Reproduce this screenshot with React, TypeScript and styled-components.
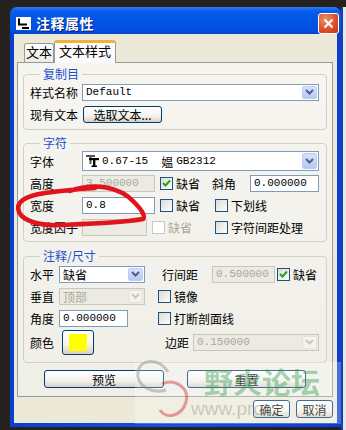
import styled, { createGlobalStyle } from "styled-components";

const Global = createGlobalStyle`
    html, body {
        margin: 0;
        padding: 0;
    }
    body {
        background: #26221f;
        font-family: "Noto Sans CJK SC", "Liberation Sans", sans-serif;
        font-size: 12px;
        color: #000;
    }
`

const Page = styled.div`
    position: relative;
    width: 346px;
    height: 430px;
    overflow: hidden;
    box-sizing: border-box;
    padding: 7px 0 0 10px;
    display: flex;
    align-items: flex-start;
`

const RightEdge = styled.div`
    width: 5px;
    height: 423px;
    background: #e6e7ec;
    border-left: 2px solid #1b3fa8;
    box-sizing: border-box;
`

const Window = styled.div`
    width: 331px;
    height: 420px;
    display: flex;
    flex-direction: column;
    border-radius: 7px 7px 0 0;
    background: linear-gradient(to right, #0b3fd4, #1650e0 50%, #0b3fd4);
    overflow: hidden;
`

const TitleBar = styled.div`
    height: 27px;
    flex: none;
    display: flex;
    align-items: center;
    padding: 5px 2px 0 6px;
    box-sizing: border-box;
    gap: 5px;
    background: linear-gradient(#2f7cf6 0%, #0a5ce8 15%, #0055e5 50%, #0350e0 85%, #0744c8 100%);
`

const Title = styled.span`
    color: #fff;
    font-size: 14px;
    font-weight: bold;
    letter-spacing: 0.5px;
    text-shadow: 1px 1px 0 #0a1f80;
    flex: 1;
`

const CloseButton = styled.div`
    width: 21px;
    height: 21px;
    box-sizing: border-box;
    border: 1px solid #fff;
    border-radius: 3px;
    background: radial-gradient(circle at 35% 30%, #f0906e, #db4b25 60%, #c23a17);
    display: flex;
    align-items: center;
    justify-content: center;
`

const Body = styled.div`
    flex: 1;
    margin: 0 4px 4px;
    background: #ece9d8;
    padding: 6px 4px 0 3px;
    display: flex;
    flex-direction: column;
`

const Tabs = styled.div`
    display: flex;
    align-items: flex-end;
    height: 22px;
    margin-left: 7px;
`

const Tab = styled.div<{ $active?: boolean }>`
    box-sizing: border-box;
    height: ${p => p.$active ? "23px" : "19px"};
    width: ${p => p.$active ? "62px" : "30px"};
    margin-bottom: ${p => p.$active ? "-1px" : "0"};
    position: relative;
    z-index: ${p => p.$active ? 1 : 0};
    border: 1px solid #919b9c;
    border-bottom: none;
    border-top: ${p => p.$active ? "3px solid #f0b040" : "1px solid #919b9c"};
    border-radius: 3px 3px 0 0;
    background: ${p => p.$active ? "#fcfcfe" : "linear-gradient(#ffffff, #ecebe6)"};
    font-size: 13px;
    line-height: 16px;
    text-align: center;
`

const Panel = styled.div`
    flex: none;
    height: 335px;
    box-sizing: border-box;
    border: 1px solid #919b9c;
    background: linear-gradient(#f6f5f0, #efeee7);
    padding: 4px 5px 0;
    display: flex;
    flex-direction: column;
`

const Group = styled.fieldset<{ $mt?: number; $pb?: number }>`
    margin: ${p => p.$mt ?? 0}px 0 0;
    padding: 0 7px ${p => p.$pb ?? 4}px 6px;
    border: 1px solid #d3d0c0;
    border-radius: 4px;
    min-width: 0;
`

const Legend = styled.legend`
    color: #1d4fd0;
    font-size: 12px;
    line-height: 14px;
    padding: 0 3px;
    margin-left: 10px;
`

const Row = styled.div<{ $h?: number }>`
    height: ${p => p.$h ?? 22}px;
    display: flex;
    align-items: center;
`

const Label = styled.span<{ $w: number; $ml?: number }>`
    flex: none;
    width: ${p => p.$w}px;
    margin-left: ${p => p.$ml ?? 0}px;
    font-size: 12px;
    white-space: nowrap;
`

const Field = styled.div<{ $w?: number; $h?: number; $disabled?: boolean }>`
    box-sizing: border-box;
    ${p => p.$w ? `width: ${p.$w}px; flex: none;` : "flex: 1;"}
    height: ${p => p.$h ?? 17}px;
    border: 1px solid ${p => p.$disabled ? "#c9c7ba" : "#7f9db9"};
    background: ${p => p.$disabled ? "#ebebe4" : "#fff"};
    color: ${p => p.$disabled ? "#aca899" : "#000"};
    font-family: "Liberation Mono", "DejaVu Sans Mono", monospace;
    font-size: 11px;
    padding-left: 3px;
    display: flex;
    align-items: center;
    overflow: hidden;
    white-space: nowrap;
`

const SelectBox = styled(Field)`
    padding-right: 1px;
`

const SelectText = styled.span<{ $cjk?: boolean }>`
    flex: 1;
    display: flex;
    align-items: center;
    gap: 3px;
    font-family: ${p => p.$cjk ? `"Noto Sans CJK SC", sans-serif` : `"Liberation Mono", monospace`};
    font-size: ${p => p.$cjk ? "12px" : "11px"};
`

const Cjk = styled.span`
    font-family: "Noto Sans CJK SC", sans-serif;
    font-size: 12px;
    margin-left: 10px;
`

const Drop = styled.div<{ $disabled?: boolean }>`
    width: 15px;
    height: calc(100% - 2px);
    max-height: 17px;
    box-sizing: border-box;
    border-radius: 2px;
    border: 1px solid ${p => p.$disabled ? "#e4e2d8" : "#bccdf5"};
    background: ${p => p.$disabled ? "#f4f3ee" : "linear-gradient(#d6e1fc, #b4c8f6)"};
    display: flex;
    align-items: center;
    justify-content: center;
`

const Check = styled.label<{ $ml?: number; $disabled?: boolean }>`
    display: flex;
    align-items: center;
    gap: 3px;
    margin-left: ${p => p.$ml ?? 0}px;
    color: ${p => p.$disabled ? "#aca899" : "#000"};
    font-size: 12px;
    white-space: nowrap;
`

const Box = styled.span<{ $disabled?: boolean }>`
    width: 13px;
    height: 13px;
    box-sizing: border-box;
    border: 1px solid ${p => p.$disabled ? "#cac8bb" : "#1c5180"};
    background: ${p => p.$disabled ? "#fff" : "linear-gradient(135deg, #dcdcd7, #fdfdfb)"};
    display: flex;
    align-items: center;
    justify-content: center;
`

const Button = styled.div<{ $w: number; $h?: number }>`
    box-sizing: border-box;
    width: ${p => p.$w}px;
    height: ${p => p.$h ?? 18}px;
    border: 1px solid #003c74;
    border-radius: 3px;
    background: linear-gradient(#ffffff, #f3f2ec 60%, #d6d0c5);
    font-size: 12px;
    display: flex;
    align-items: center;
    justify-content: center;
    flex: none;
`

const Swatch = styled.span<{ $color: string }>`
    width: 18px;
    height: 17px;
    background: ${p => p.$color};
`

const ButtonRow = styled.div`
    display: flex;
    justify-content: center;
    gap: 23px;
    margin-top: 7px;
`

const Footer = styled.div`
    display: flex;
    justify-content: flex-end;
    gap: 6px;
    margin-top: 3px;
`

const Scribble = styled.svg`
    position: absolute;
    left: 0;
    top: 0;
    pointer-events: none;
`

const Haze = styled.div`
    position: absolute;
    left: 135px;
    top: 362px;
    width: 206px;
    height: 62px;
    background: rgba(255, 255, 255, 0.25);
    pointer-events: none;
`

const WatermarkTitle = styled.div`
    position: absolute;
    left: 204px;
    top: 360px;
    font-size: 29px;
    font-weight: bold;
    color: rgba(60, 160, 80, 0.45);
    pointer-events: none;
`

const WatermarkUrl = styled.div`
    position: absolute;
    left: 191px;
    top: 398px;
    font-family: "Liberation Sans", sans-serif;
    font-size: 19px;
    color: rgba(120, 120, 120, 0.35);
    pointer-events: none;
`

const Chevron = ({ disabled }: { disabled?: boolean }) => (
    <svg width="9" height="6" viewBox="0 0 9 6">
        <path d="M1 1 L4.5 4.5 L8 1" stroke={disabled ? "#c9c7ba" : "#4d6185"} strokeWidth="2" fill="none" />
    </svg>
)

const Tick = () => (
    <svg width="9" height="9" viewBox="0 0 9 9">
        <path d="M1 4 L3.5 6.5 L8 1.5" stroke="#21a121" strokeWidth="2" fill="none" />
    </svg>
)

interface SelectProps {
    text: React.ReactNode;
    w?: number;
    h?: number;
    disabled?: boolean;
    cjk?: boolean;
}

const Select = ({ text, w, h, disabled, cjk }: SelectProps) => (
    <SelectBox $w={w} $h={h} $disabled={disabled}>
        <SelectText $cjk={cjk}>{text}</SelectText>
        <Drop $disabled={disabled}><Chevron disabled={disabled} /></Drop>
    </SelectBox>
)

const CheckItem = ({ text, checked, disabled, ml }: { text: string; checked?: boolean; disabled?: boolean; ml?: number }) => (
    <Check $ml={ml} $disabled={disabled}>
        <Box $disabled={disabled}>{checked && <Tick />}</Box>
        {text}
    </Check>
)

const FontIcon = () => (
    <svg width="13" height="12" viewBox="0 0 13 12">
        <rect x="0" y="0" width="9" height="2" fill="#555" />
        <rect x="3.5" y="0" width="2" height="9" fill="#555" />
        <rect x="3" y="3" width="10" height="2.2" fill="#000" />
        <rect x="7" y="3" width="2.4" height="9" fill="#000" />
        <rect x="5.5" y="10.5" width="5.5" height="1.5" fill="#000" />
    </svg>
)

const App = () => {
    return (
        <>
        <Global />
        <Page>
            <Window>
                <TitleBar>
                    <svg width="15" height="13" viewBox="0 0 15 13">
                        <rect x="0" y="0" width="15" height="13" fill="#fff" />
                        <path d="M3 1.5 V7.5 H11" stroke="#000" strokeWidth="2" fill="none" />
                        <rect x="6" y="10" width="7" height="2" fill="#000" />
                    </svg>
                    <Title>注释属性</Title>
                    <CloseButton>
                        <svg width="11" height="11" viewBox="0 0 11 11">
                            <path d="M1.5 1.5 L9.5 9.5 M9.5 1.5 L1.5 9.5" stroke="#fff" strokeWidth="2" />
                        </svg>
                    </CloseButton>
                </TitleBar>
                <Body>
                    <Tabs>
                        <Tab>文本</Tab>
                        <Tab $active>文本样式</Tab>
                    </Tabs>
                    <Panel>
                        <Group>
                            <Legend>复制目</Legend>
                            <Row>
                                <Label $w={52}>样式名称</Label>
                                <Select text="Default" />
                            </Row>
                            <Row>
                                <Label $w={53}>现有文本</Label>
                                <Button $w={79} $h={17}>选取文本...</Button>
                            </Row>
                        </Group>
                        <Group $mt={6} $pb={3}>
                            <Legend>字符</Legend>
                            <Row>
                                <Label $w={52}>字体</Label>
                                <Select h={20} text={<><FontIcon />0.67-15<Cjk>媪</Cjk>GB2312</>} />
                            </Row>
                            <Row>
                                <Label $w={52}>高度</Label>
                                <Field $w={73} $disabled>3.500000</Field>
                                <CheckItem ml={5} text="缺省" checked />
                                <Label $w={38} $ml={12}>斜角</Label>
                                <Field>0.000000</Field>
                            </Row>
                            <Row>
                                <Label $w={52}>宽度</Label>
                                <Field $w={73}>0.8</Field>
                                <CheckItem ml={5} text="缺省" />
                                <CheckItem ml={15} text="下划线" />
                            </Row>
                            <Row>
                                <Label $w={52}>宽度因子</Label>
                                <Field $w={65} $disabled></Field>
                                <CheckItem ml={5} text="缺省" disabled />
                                <CheckItem ml={23} text="字符间距处理" />
                            </Row>
                        </Group>
                        <Group $mt={7} $pb={7}>
                            <Legend>注释/尺寸</Legend>
                            <Row>
                                <Label $w={29}>水平</Label>
                                <Select w={86} text="缺省" cjk />
                                <Label $w={50} $ml={17}>行间距</Label>
                                <Field $w={63} $disabled>0.500000</Field>
                                <CheckItem ml={2} text="缺省" checked />
                            </Row>
                            <Row>
                                <Label $w={29}>垂直</Label>
                                <Select w={86} text={<span style={{ color: "#aca899" }}>顶部</span>} cjk disabled />
                                <CheckItem ml={13} text="镜像" />
                            </Row>
                            <Row>
                                <Label $w={29}>角度</Label>
                                <Field $w={69}>0.000000</Field>
                                <CheckItem ml={30} text="打断剖面线" />
                            </Row>
                            <Row $h={26}>
                                <Label $w={32}>颜色</Label>
                                <Button $w={32} $h={25}><Swatch $color="#ffff00" /></Button>
                                <Label $w={28} $ml={71}>边距</Label>
                                <Select text="0.150000" disabled />
                            </Row>
                        </Group>
                        <ButtonRow>
                            <Button $w={120}>预览</Button>
                            <Button $w={119}>重置</Button>
                        </ButtonRow>
                    </Panel>
                    <Footer>
                        <Button $w={37}>确定</Button>
                        <Button $w={37}>取消</Button>
                    </Footer>
                </Body>
            </Window>
            <RightEdge />
            <Haze />
            <Scribble width="346" height="430" viewBox="0 0 346 430">
                <path d="M70 191 C 95 182, 120 187, 134 202 C 141 209, 146 216, 143 219 C 120 223, 85 224, 60 225 C 40 226, 23 221, 19 212 C 15 202, 25 196, 45 193 C 60 191, 78 189, 95 188"
                    stroke="#e0141a" strokeWidth="4.5" fill="none" strokeLinecap="round" />
                <g opacity="0.45" fill="none" strokeWidth="3">
                    <path d="M168 372 C 160 358, 140 358, 138 372 C 136 386, 152 394, 166 390" stroke="#8a8a8a" />
                    <path d="M162 384 C 175 378, 190 388, 186 402 C 182 416, 166 420, 160 410" stroke="#d0303a" />
                </g>
            </Scribble>
            <WatermarkTitle>野火论坛</WatermarkTitle>
            <WatermarkUrl>www.pro</WatermarkUrl>
        </Page>
        </>
    )
}

export default App;
